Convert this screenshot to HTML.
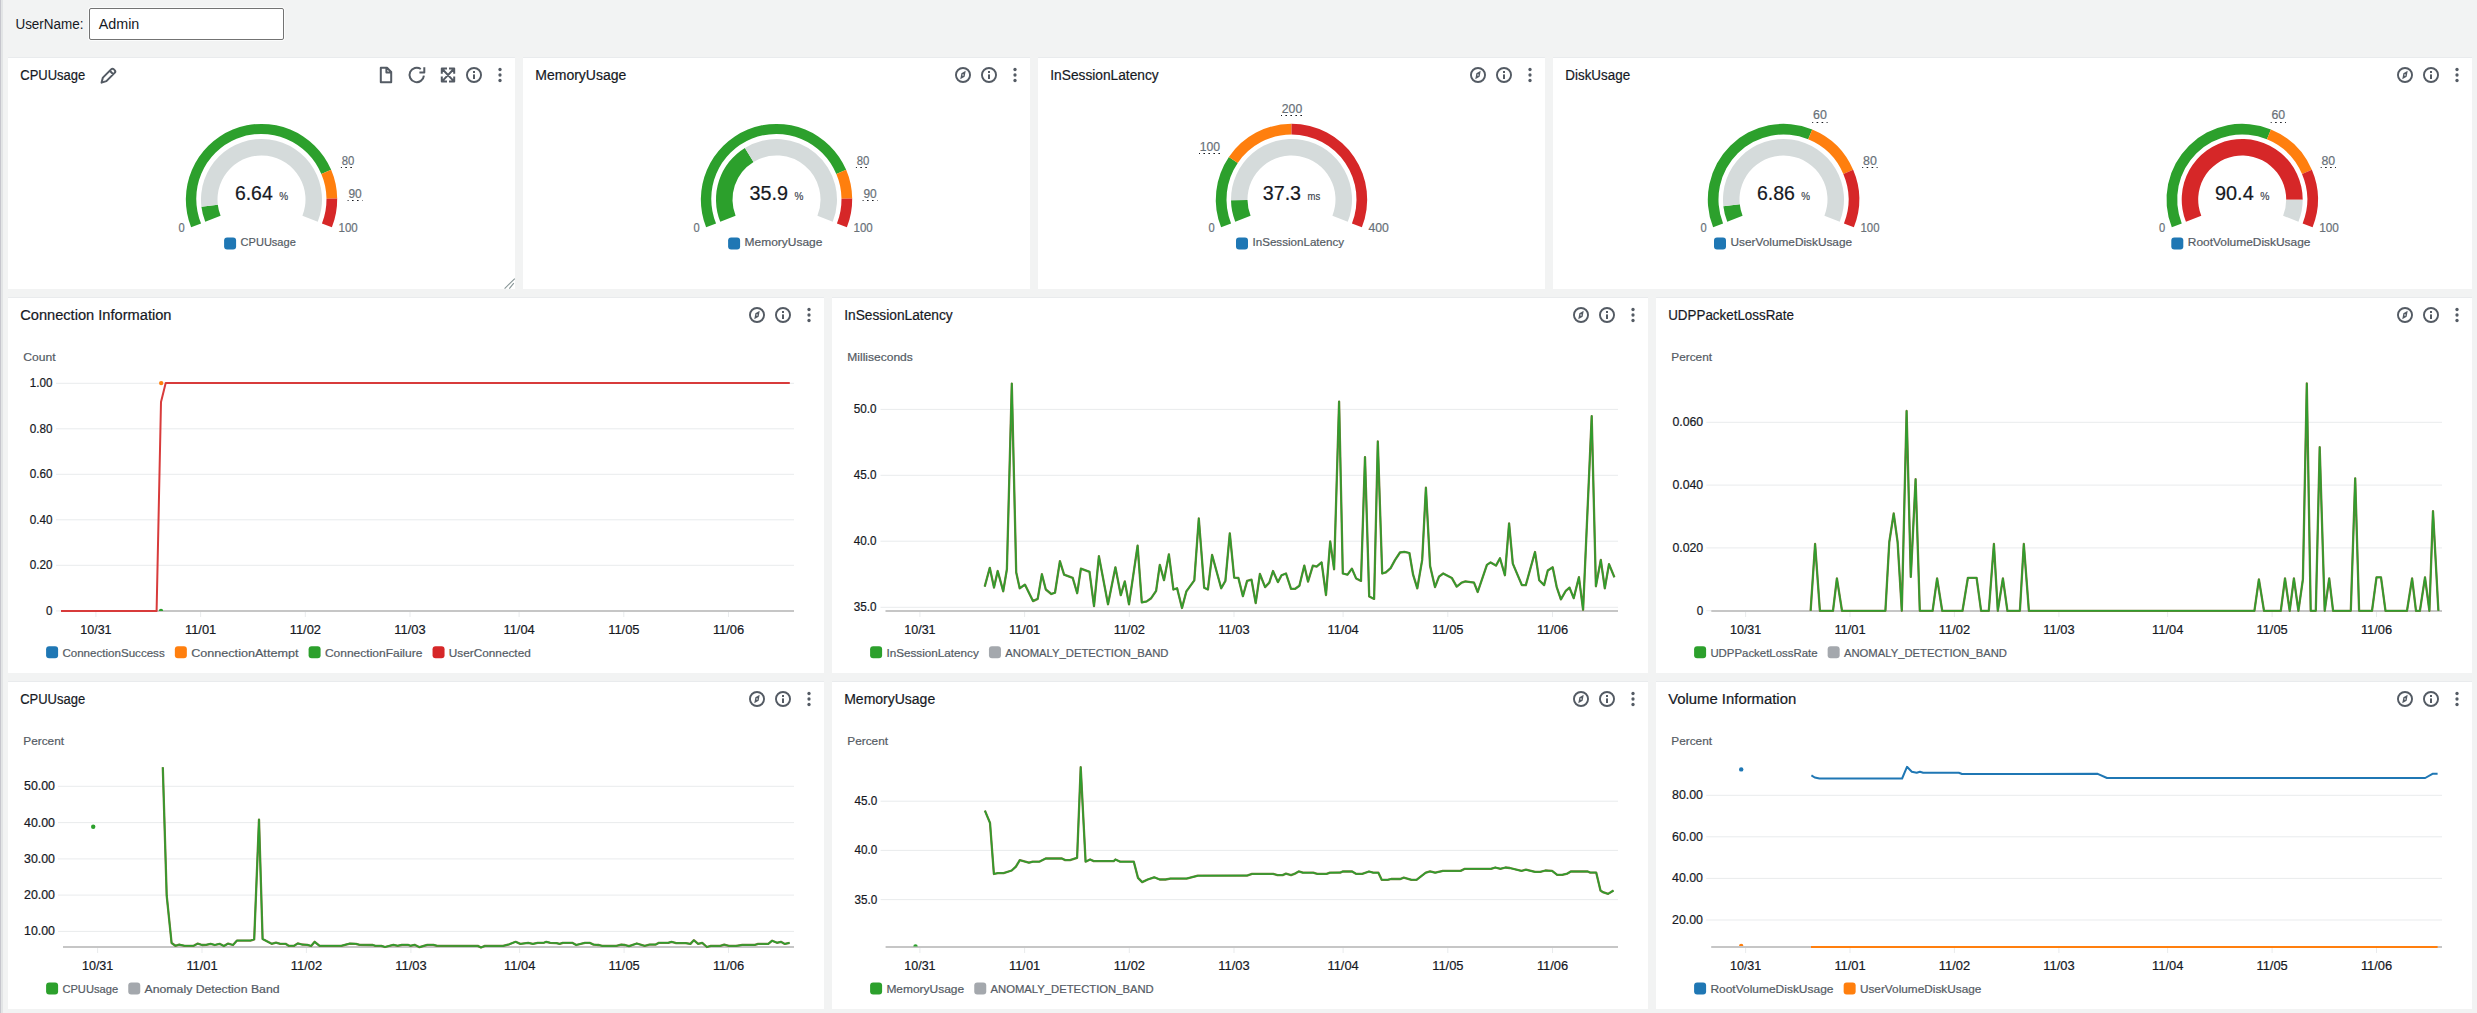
<!DOCTYPE html>
<html><head><meta charset="utf-8"><title>Dashboard</title>
<style>
html,body{margin:0;padding:0;}
body{width:2477px;height:1013px;overflow:hidden;background:#f2f3f3;position:relative;font-family:"Liberation Sans", sans-serif;}
.lb{position:absolute;left:0;top:0;width:1px;height:1013px;background:#c6c6cd;}
.lb2{position:absolute;left:1px;top:0;width:2px;height:1013px;background:#e3e5e6;}
.p{position:absolute;background:#fff;box-shadow:0 -1px 0 #e9ebed;}
.lbl{position:absolute;left:15px;top:15px;font-size:14px;color:#16191f;}
.inp{position:absolute;left:89px;top:8px;width:193px;height:30px;border:1px solid #737373;border-radius:2px;background:#fff;box-shadow:0 0 0 1px rgba(255,255,255,.7);}
svg{position:absolute;left:0;top:0;}
text{font-family:"Liberation Sans", sans-serif;}
</style></head><body>
<div class="lb"></div><div class="lb2"></div>
<div class="inp"></div>
<div class="p" style="left:8px;top:58px;width:507px;height:231px"></div><div class="p" style="left:523px;top:58px;width:507px;height:231px"></div><div class="p" style="left:1038px;top:58px;width:507px;height:231px"></div><div class="p" style="left:1553px;top:58px;width:919px;height:231px"></div><div class="p" style="left:8px;top:298px;width:816px;height:375px"></div><div class="p" style="left:832px;top:298px;width:816px;height:375px"></div><div class="p" style="left:1656px;top:298px;width:816px;height:375px"></div><div class="p" style="left:8px;top:682px;width:816px;height:327px"></div><div class="p" style="left:832px;top:682px;width:816px;height:327px"></div><div class="p" style="left:1656px;top:682px;width:816px;height:327px"></div>
<svg width="2477" height="1013" viewBox="0 0 2477 1013">
<text x="15.4" y="29.1" font-size="14" fill="#16191f" textLength="68.2" lengthAdjust="spacingAndGlyphs">UserName:</text>
<text x="98.7" y="29.1" font-size="14" fill="#16191f" textLength="40.6" lengthAdjust="spacingAndGlyphs">Admin</text>
<text x="20.00" y="80.00" font-size="14" fill="#16191f"></text>
<text x="535.00" y="80.00" font-size="14" fill="#16191f"></text>
<text x="1050.00" y="80.00" font-size="14" fill="#16191f"></text>
<text x="1565.00" y="80.00" font-size="14" fill="#16191f"></text>
<text x="20.30" y="80.00" font-size="14" fill="#16191f" stroke="#16191f" stroke-width="0.2" textLength="65.00" lengthAdjust="spacingAndGlyphs">CPUUsage</text>
<circle cx="500" cy="69.5" r="1.65" fill="#545b64"/>
<circle cx="500" cy="75" r="1.65" fill="#545b64"/>
<circle cx="500" cy="80.5" r="1.65" fill="#545b64"/>
<circle cx="474" cy="75" r="7.05" fill="none" stroke="#545b64" stroke-width="1.9"/>
<rect x="473" y="71" width="2" height="2" fill="#545b64"/>
<rect x="473" y="74.4" width="2" height="4.6" fill="#545b64"/>
<text x="535.30" y="80.00" font-size="14" fill="#16191f" stroke="#16191f" stroke-width="0.2" textLength="91.00" lengthAdjust="spacingAndGlyphs">MemoryUsage</text>
<circle cx="1015" cy="69.5" r="1.65" fill="#545b64"/>
<circle cx="1015" cy="75" r="1.65" fill="#545b64"/>
<circle cx="1015" cy="80.5" r="1.65" fill="#545b64"/>
<circle cx="989" cy="75" r="7.05" fill="none" stroke="#545b64" stroke-width="1.9"/>
<rect x="988" y="71" width="2" height="2" fill="#545b64"/>
<rect x="988" y="74.4" width="2" height="4.6" fill="#545b64"/>
<circle cx="963" cy="75" r="7.05" fill="none" stroke="#545b64" stroke-width="1.9"/>
<path d="M965.7,70.8 L964.6,76.7 L960.3,79.2 L961.4,73.3 Z" fill="#545b64"/>
<rect x="962.3" y="74.3" width="1.4" height="1.4" fill="#e8eaec"/>
<text x="1050.30" y="80.00" font-size="14" fill="#16191f" stroke="#16191f" stroke-width="0.2" textLength="108.40" lengthAdjust="spacingAndGlyphs">InSessionLatency</text>
<circle cx="1530" cy="69.5" r="1.65" fill="#545b64"/>
<circle cx="1530" cy="75" r="1.65" fill="#545b64"/>
<circle cx="1530" cy="80.5" r="1.65" fill="#545b64"/>
<circle cx="1504" cy="75" r="7.05" fill="none" stroke="#545b64" stroke-width="1.9"/>
<rect x="1503" y="71" width="2" height="2" fill="#545b64"/>
<rect x="1503" y="74.4" width="2" height="4.6" fill="#545b64"/>
<circle cx="1478" cy="75" r="7.05" fill="none" stroke="#545b64" stroke-width="1.9"/>
<path d="M1480.7,70.8 L1479.6,76.7 L1475.3,79.2 L1476.4,73.3 Z" fill="#545b64"/>
<rect x="1477.3" y="74.3" width="1.4" height="1.4" fill="#e8eaec"/>
<text x="1565.30" y="80.00" font-size="14" fill="#16191f" stroke="#16191f" stroke-width="0.2" textLength="64.80" lengthAdjust="spacingAndGlyphs">DiskUsage</text>
<circle cx="2457" cy="69.5" r="1.65" fill="#545b64"/>
<circle cx="2457" cy="75" r="1.65" fill="#545b64"/>
<circle cx="2457" cy="80.5" r="1.65" fill="#545b64"/>
<circle cx="2431" cy="75" r="7.05" fill="none" stroke="#545b64" stroke-width="1.9"/>
<rect x="2430" y="71" width="2" height="2" fill="#545b64"/>
<rect x="2430" y="74.4" width="2" height="4.6" fill="#545b64"/>
<circle cx="2405" cy="75" r="7.05" fill="none" stroke="#545b64" stroke-width="1.9"/>
<path d="M2407.7,70.8 L2406.6,76.7 L2402.3,79.2 L2403.4,73.3 Z" fill="#545b64"/>
<rect x="2404.3" y="74.3" width="1.4" height="1.4" fill="#e8eaec"/>
<text x="20.20" y="320.00" font-size="14" fill="#16191f" stroke="#16191f" stroke-width="0.2" textLength="151.30" lengthAdjust="spacingAndGlyphs">Connection Information</text>
<circle cx="809" cy="309.5" r="1.65" fill="#545b64"/>
<circle cx="809" cy="315" r="1.65" fill="#545b64"/>
<circle cx="809" cy="320.5" r="1.65" fill="#545b64"/>
<circle cx="783" cy="315" r="7.05" fill="none" stroke="#545b64" stroke-width="1.9"/>
<rect x="782" y="311" width="2" height="2" fill="#545b64"/>
<rect x="782" y="314.4" width="2" height="4.6" fill="#545b64"/>
<circle cx="757" cy="315" r="7.05" fill="none" stroke="#545b64" stroke-width="1.9"/>
<path d="M759.7,310.8 L758.6,316.7 L754.3,319.2 L755.4,313.3 Z" fill="#545b64"/>
<rect x="756.3" y="314.3" width="1.4" height="1.4" fill="#e8eaec"/>
<text x="844.20" y="320.00" font-size="14" fill="#16191f" stroke="#16191f" stroke-width="0.2" textLength="108.50" lengthAdjust="spacingAndGlyphs">InSessionLatency</text>
<circle cx="1633" cy="309.5" r="1.65" fill="#545b64"/>
<circle cx="1633" cy="315" r="1.65" fill="#545b64"/>
<circle cx="1633" cy="320.5" r="1.65" fill="#545b64"/>
<circle cx="1607" cy="315" r="7.05" fill="none" stroke="#545b64" stroke-width="1.9"/>
<rect x="1606" y="311" width="2" height="2" fill="#545b64"/>
<rect x="1606" y="314.4" width="2" height="4.6" fill="#545b64"/>
<circle cx="1581" cy="315" r="7.05" fill="none" stroke="#545b64" stroke-width="1.9"/>
<path d="M1583.7,310.8 L1582.6,316.7 L1578.3,319.2 L1579.4,313.3 Z" fill="#545b64"/>
<rect x="1580.3" y="314.3" width="1.4" height="1.4" fill="#e8eaec"/>
<text x="1668.20" y="320.00" font-size="14" fill="#16191f" stroke="#16191f" stroke-width="0.2" textLength="125.80" lengthAdjust="spacingAndGlyphs">UDPPacketLossRate</text>
<circle cx="2457" cy="309.5" r="1.65" fill="#545b64"/>
<circle cx="2457" cy="315" r="1.65" fill="#545b64"/>
<circle cx="2457" cy="320.5" r="1.65" fill="#545b64"/>
<circle cx="2431" cy="315" r="7.05" fill="none" stroke="#545b64" stroke-width="1.9"/>
<rect x="2430" y="311" width="2" height="2" fill="#545b64"/>
<rect x="2430" y="314.4" width="2" height="4.6" fill="#545b64"/>
<circle cx="2405" cy="315" r="7.05" fill="none" stroke="#545b64" stroke-width="1.9"/>
<path d="M2407.7,310.8 L2406.6,316.7 L2402.3,319.2 L2403.4,313.3 Z" fill="#545b64"/>
<rect x="2404.3" y="314.3" width="1.4" height="1.4" fill="#e8eaec"/>
<text x="20.20" y="704.00" font-size="14" fill="#16191f" stroke="#16191f" stroke-width="0.2" textLength="65.00" lengthAdjust="spacingAndGlyphs">CPUUsage</text>
<circle cx="809" cy="693.5" r="1.65" fill="#545b64"/>
<circle cx="809" cy="699" r="1.65" fill="#545b64"/>
<circle cx="809" cy="704.5" r="1.65" fill="#545b64"/>
<circle cx="783" cy="699" r="7.05" fill="none" stroke="#545b64" stroke-width="1.9"/>
<rect x="782" y="695" width="2" height="2" fill="#545b64"/>
<rect x="782" y="698.4" width="2" height="4.6" fill="#545b64"/>
<circle cx="757" cy="699" r="7.05" fill="none" stroke="#545b64" stroke-width="1.9"/>
<path d="M759.7,694.8 L758.6,700.7 L754.3,703.2 L755.4,697.3 Z" fill="#545b64"/>
<rect x="756.3" y="698.3" width="1.4" height="1.4" fill="#e8eaec"/>
<text x="844.20" y="704.00" font-size="14" fill="#16191f" stroke="#16191f" stroke-width="0.2" textLength="91.00" lengthAdjust="spacingAndGlyphs">MemoryUsage</text>
<circle cx="1633" cy="693.5" r="1.65" fill="#545b64"/>
<circle cx="1633" cy="699" r="1.65" fill="#545b64"/>
<circle cx="1633" cy="704.5" r="1.65" fill="#545b64"/>
<circle cx="1607" cy="699" r="7.05" fill="none" stroke="#545b64" stroke-width="1.9"/>
<rect x="1606" y="695" width="2" height="2" fill="#545b64"/>
<rect x="1606" y="698.4" width="2" height="4.6" fill="#545b64"/>
<circle cx="1581" cy="699" r="7.05" fill="none" stroke="#545b64" stroke-width="1.9"/>
<path d="M1583.7,694.8 L1582.6,700.7 L1578.3,703.2 L1579.4,697.3 Z" fill="#545b64"/>
<rect x="1580.3" y="698.3" width="1.4" height="1.4" fill="#e8eaec"/>
<text x="1668.20" y="704.00" font-size="14" fill="#16191f" stroke="#16191f" stroke-width="0.2" textLength="128.00" lengthAdjust="spacingAndGlyphs">Volume Information</text>
<circle cx="2457" cy="693.5" r="1.65" fill="#545b64"/>
<circle cx="2457" cy="699" r="1.65" fill="#545b64"/>
<circle cx="2457" cy="704.5" r="1.65" fill="#545b64"/>
<circle cx="2431" cy="699" r="7.05" fill="none" stroke="#545b64" stroke-width="1.9"/>
<rect x="2430" y="695" width="2" height="2" fill="#545b64"/>
<rect x="2430" y="698.4" width="2" height="4.6" fill="#545b64"/>
<circle cx="2405" cy="699" r="7.05" fill="none" stroke="#545b64" stroke-width="1.9"/>
<path d="M2407.7,694.8 L2406.6,700.7 L2402.3,703.2 L2403.4,697.3 Z" fill="#545b64"/>
<rect x="2404.3" y="698.3" width="1.4" height="1.4" fill="#e8eaec"/>
<path d="M441.8,73.8 V68.6 H447 M449,68.6 H454.2 V73.8 M454.2,76.4 V81.6 H449 M447,81.6 H441.8 V76.4 M443,69.8 L453,80.4 M453,69.8 L443,80.4" fill="none" stroke="#545b64" stroke-width="2" stroke-linejoin="round" stroke-linejoin="miter"/>
<path d="M441,68 L445.5,68 L441,72.5 Z M455,68 L450.5,68 L455,72.5 Z M441,82 L445.5,82 L441,77.5 Z M455,82 L450.5,82 L455,77.5 Z" fill="#545b64"/>
<path d="M423.9,75.6 A7.2,7.2 0 1 1 420.8,69.0" fill="none" stroke="#545b64" stroke-width="2" stroke-linejoin="round"/>
<path d="M419.4,72.4 H424.3 V67.3" fill="none" stroke="#545b64" stroke-width="2" stroke-linejoin="round" stroke-linejoin="miter"/>
<path d="M380.8,67.8 H387 L391.2,72 V82.2 H380.8 Z M386.4,68 V72.6 H391" fill="none" stroke="#545b64" stroke-width="2" stroke-linejoin="round" stroke-linejoin="miter"/>
<path d="M101.6,82.6 L102.9,77.6 L111.1,69.4 Q112.5,68 113.9,69.4 L114.6,70.1 Q116,71.5 114.6,72.9 L106.4,81.1 Z M109.8,70.8 L113.2,74.2" fill="none" stroke="#545b64" stroke-width="2" stroke-linejoin="round"/>
<path d="M504.6,288.6 L514.8,278.6 M509.3,288.6 L513.8,283.2" stroke="#879596" stroke-width="1.1" fill="none"/>
<path d="M191.12,227.37 A75.7,75.7 0 0 1 331.16,169.87 L321.32,174.06 A65,65 0 0 0 201.06,223.43 Z" fill="#2ca02c"/>
<path d="M331.16,169.87 A75.7,75.7 0 0 1 337.19,198.55 L326.49,198.68 A65,65 0 0 0 321.32,174.06 Z" fill="#ff7f0e"/>
<path d="M337.19,198.55 A75.7,75.7 0 0 1 331.88,227.37 L321.94,223.43 A65,65 0 0 0 326.49,198.68 Z" fill="#d62728"/>
<path d="M205.25,221.77 A60.5,60.5 0 0 1 201.42,206.64 L217.81,204.69 A44,44 0 0 0 220.59,215.70 Z" fill="#2ca02c"/>
<path d="M201.42,206.64 A60.5,60.5 0 1 1 317.75,221.77 L302.41,215.70 A44,44 0 1 0 217.81,204.69 Z" fill="#d5dbdb"/>
<text x="234.90" y="199.60" font-size="19.5" fill="#16191f" stroke="#16191f" stroke-width="0.2" textLength="37.80" lengthAdjust="spacingAndGlyphs">6.64</text>
<text x="279.20" y="199.80" font-size="11" fill="#414750" stroke="#414750" stroke-width="0.2" textLength="8.90" lengthAdjust="spacingAndGlyphs">%</text>
<text x="184.60" y="232.00" font-size="12" fill="#687078" stroke="#687078" stroke-width="0.2" text-anchor="end" textLength="6.20" lengthAdjust="spacingAndGlyphs">0</text>
<text x="338.50" y="232.00" font-size="12" fill="#687078" stroke="#687078" stroke-width="0.2" textLength="19.20" lengthAdjust="spacingAndGlyphs">100</text>
<text x="341.70" y="165.20" font-size="12" fill="#687078" stroke="#687078" stroke-width="0.2" textLength="12.60" lengthAdjust="spacingAndGlyphs">80</text>
<line x1="340.90" y1="167.5" x2="355.10" y2="167.5" stroke="#16191f" stroke-width="1" stroke-dasharray="1.6,3.4" stroke-dashoffset="0.6"/>
<text x="348.40" y="197.70" font-size="12" fill="#687078" stroke="#687078" stroke-width="0.2" textLength="13.30" lengthAdjust="spacingAndGlyphs">90</text>
<line x1="347.60" y1="200.5" x2="362.50" y2="200.5" stroke="#16191f" stroke-width="1" stroke-dasharray="1.6,3.4" stroke-dashoffset="0.6"/>
<rect x="224.10" y="237.4" width="12" height="12" rx="3" fill="#1f77b4"/>
<text x="240.60" y="245.90" font-size="11" fill="#545b64" stroke="#545b64" stroke-width="0.2" textLength="55.20" lengthAdjust="spacingAndGlyphs">CPUUsage</text>
<path d="M706.12,227.37 A75.7,75.7 0 0 1 846.16,169.87 L836.32,174.06 A65,65 0 0 0 716.06,223.43 Z" fill="#2ca02c"/>
<path d="M846.16,169.87 A75.7,75.7 0 0 1 852.19,198.55 L841.49,198.68 A65,65 0 0 0 836.32,174.06 Z" fill="#ff7f0e"/>
<path d="M852.19,198.55 A75.7,75.7 0 0 1 846.88,227.37 L836.94,223.43 A65,65 0 0 0 841.49,198.68 Z" fill="#d62728"/>
<path d="M720.25,221.77 A60.5,60.5 0 0 1 744.91,147.90 L753.53,161.97 A44,44 0 0 0 735.59,215.70 Z" fill="#2ca02c"/>
<path d="M744.91,147.90 A60.5,60.5 0 0 1 832.75,221.77 L817.41,215.70 A44,44 0 0 0 753.53,161.97 Z" fill="#d5dbdb"/>
<text x="749.55" y="199.60" font-size="19.5" fill="#16191f" stroke="#16191f" stroke-width="0.2" textLength="38.50" lengthAdjust="spacingAndGlyphs">35.9</text>
<text x="794.55" y="199.80" font-size="11" fill="#414750" stroke="#414750" stroke-width="0.2" textLength="8.90" lengthAdjust="spacingAndGlyphs">%</text>
<text x="699.60" y="232.00" font-size="12" fill="#687078" stroke="#687078" stroke-width="0.2" text-anchor="end" textLength="6.20" lengthAdjust="spacingAndGlyphs">0</text>
<text x="853.50" y="232.00" font-size="12" fill="#687078" stroke="#687078" stroke-width="0.2" textLength="19.20" lengthAdjust="spacingAndGlyphs">100</text>
<text x="856.70" y="165.20" font-size="12" fill="#687078" stroke="#687078" stroke-width="0.2" textLength="12.60" lengthAdjust="spacingAndGlyphs">80</text>
<line x1="855.90" y1="167.5" x2="870.10" y2="167.5" stroke="#16191f" stroke-width="1" stroke-dasharray="1.6,3.4" stroke-dashoffset="0.6"/>
<text x="863.40" y="197.70" font-size="12" fill="#687078" stroke="#687078" stroke-width="0.2" textLength="13.30" lengthAdjust="spacingAndGlyphs">90</text>
<line x1="862.60" y1="200.5" x2="877.50" y2="200.5" stroke="#16191f" stroke-width="1" stroke-dasharray="1.6,3.4" stroke-dashoffset="0.6"/>
<rect x="728.10" y="237.4" width="12" height="12" rx="3" fill="#1f77b4"/>
<text x="744.60" y="245.90" font-size="11" fill="#545b64" stroke="#545b64" stroke-width="0.2" textLength="77.80" lengthAdjust="spacingAndGlyphs">MemoryUsage</text>
<path d="M1221.12,227.37 A75.7,75.7 0 0 1 1228.89,156.95 L1237.74,162.96 A65,65 0 0 0 1231.06,223.43 Z" fill="#2ca02c"/>
<path d="M1228.89,156.95 A75.7,75.7 0 0 1 1291.50,123.80 L1291.50,134.50 A65,65 0 0 0 1237.74,162.96 Z" fill="#ff7f0e"/>
<path d="M1291.50,123.80 A75.7,75.7 0 0 1 1361.88,227.37 L1351.94,223.43 A65,65 0 0 0 1291.50,134.50 Z" fill="#d62728"/>
<path d="M1235.25,221.77 A60.5,60.5 0 0 1 1231.01,200.33 L1247.50,200.10 A44,44 0 0 0 1250.59,215.70 Z" fill="#2ca02c"/>
<path d="M1231.01,200.33 A60.5,60.5 0 1 1 1347.75,221.77 L1332.41,215.70 A44,44 0 1 0 1247.50,200.10 Z" fill="#d5dbdb"/>
<text x="1262.75" y="199.60" font-size="19.5" fill="#16191f" stroke="#16191f" stroke-width="0.2" textLength="38.30" lengthAdjust="spacingAndGlyphs">37.3</text>
<text x="1307.55" y="199.80" font-size="11" fill="#414750" stroke="#414750" stroke-width="0.2" textLength="12.70" lengthAdjust="spacingAndGlyphs">ms</text>
<text x="1214.60" y="232.00" font-size="12" fill="#687078" stroke="#687078" stroke-width="0.2" text-anchor="end" textLength="6.20" lengthAdjust="spacingAndGlyphs">0</text>
<text x="1368.50" y="232.00" font-size="12" fill="#687078" stroke="#687078" stroke-width="0.2" textLength="20.40" lengthAdjust="spacingAndGlyphs">400</text>
<text x="1199.80" y="150.80" font-size="12" fill="#687078" stroke="#687078" stroke-width="0.2" textLength="20.30" lengthAdjust="spacingAndGlyphs">100</text>
<line x1="1199.00" y1="153.5" x2="1220.90" y2="153.5" stroke="#16191f" stroke-width="1" stroke-dasharray="1.6,3.4" stroke-dashoffset="0.6"/>
<text x="1281.80" y="113.00" font-size="12" fill="#687078" stroke="#687078" stroke-width="0.2" textLength="20.40" lengthAdjust="spacingAndGlyphs">200</text>
<line x1="1281.00" y1="115.5" x2="1303.00" y2="115.5" stroke="#16191f" stroke-width="1" stroke-dasharray="1.6,3.4" stroke-dashoffset="0.6"/>
<rect x="1236.00" y="237.4" width="12" height="12" rx="3" fill="#1f77b4"/>
<text x="1252.50" y="245.90" font-size="11" fill="#545b64" stroke="#545b64" stroke-width="0.2" textLength="91.60" lengthAdjust="spacingAndGlyphs">InSessionLatency</text>
<path d="M1713.12,227.37 A75.7,75.7 0 0 1 1812.25,129.47 L1808.19,139.37 A65,65 0 0 0 1723.06,223.43 Z" fill="#2ca02c"/>
<path d="M1812.25,129.47 A75.7,75.7 0 0 1 1853.16,169.87 L1843.32,174.06 A65,65 0 0 0 1808.19,139.37 Z" fill="#ff7f0e"/>
<path d="M1853.16,169.87 A75.7,75.7 0 0 1 1853.88,227.37 L1843.94,223.43 A65,65 0 0 0 1843.32,174.06 Z" fill="#d62728"/>
<path d="M1727.25,221.77 A60.5,60.5 0 0 1 1723.36,206.13 L1739.76,204.32 A44,44 0 0 0 1742.59,215.70 Z" fill="#2ca02c"/>
<path d="M1723.36,206.13 A60.5,60.5 0 1 1 1839.75,221.77 L1824.41,215.70 A44,44 0 1 0 1739.76,204.32 Z" fill="#d5dbdb"/>
<text x="1756.90" y="199.60" font-size="19.5" fill="#16191f" stroke="#16191f" stroke-width="0.2" textLength="37.90" lengthAdjust="spacingAndGlyphs">6.86</text>
<text x="1801.30" y="199.80" font-size="11" fill="#414750" stroke="#414750" stroke-width="0.2" textLength="8.80" lengthAdjust="spacingAndGlyphs">%</text>
<text x="1706.60" y="232.00" font-size="12" fill="#687078" stroke="#687078" stroke-width="0.2" text-anchor="end" textLength="6.20" lengthAdjust="spacingAndGlyphs">0</text>
<text x="1860.50" y="232.00" font-size="12" fill="#687078" stroke="#687078" stroke-width="0.2" textLength="19.00" lengthAdjust="spacingAndGlyphs">100</text>
<text x="1813.00" y="119.40" font-size="12" fill="#687078" stroke="#687078" stroke-width="0.2" textLength="13.80" lengthAdjust="spacingAndGlyphs">60</text>
<line x1="1812.20" y1="122.5" x2="1827.60" y2="122.5" stroke="#16191f" stroke-width="1" stroke-dasharray="1.6,3.4" stroke-dashoffset="0.6"/>
<text x="1863.00" y="165.10" font-size="12" fill="#687078" stroke="#687078" stroke-width="0.2" textLength="13.80" lengthAdjust="spacingAndGlyphs">80</text>
<line x1="1862.20" y1="167.5" x2="1877.60" y2="167.5" stroke="#16191f" stroke-width="1" stroke-dasharray="1.6,3.4" stroke-dashoffset="0.6"/>
<rect x="1714.00" y="237.4" width="12" height="12" rx="3" fill="#1f77b4"/>
<text x="1730.50" y="245.90" font-size="11" fill="#545b64" stroke="#545b64" stroke-width="0.2" textLength="121.60" lengthAdjust="spacingAndGlyphs">UserVolumeDiskUsage</text>
<path d="M2171.82,227.37 A75.7,75.7 0 0 1 2270.95,129.47 L2266.89,139.37 A65,65 0 0 0 2181.76,223.43 Z" fill="#2ca02c"/>
<path d="M2270.95,129.47 A75.7,75.7 0 0 1 2311.86,169.87 L2302.02,174.06 A65,65 0 0 0 2266.89,139.37 Z" fill="#ff7f0e"/>
<path d="M2311.86,169.87 A75.7,75.7 0 0 1 2312.58,227.37 L2302.64,223.43 A65,65 0 0 0 2302.02,174.06 Z" fill="#d62728"/>
<path d="M2185.95,221.77 A60.5,60.5 0 1 1 2302.70,199.68 L2286.20,199.63 A44,44 0 1 0 2201.29,215.70 Z" fill="#d62728"/>
<path d="M2302.70,199.68 A60.5,60.5 0 0 1 2298.45,221.77 L2283.11,215.70 A44,44 0 0 0 2286.20,199.63 Z" fill="#d5dbdb"/>
<text x="2215.00" y="199.60" font-size="19.5" fill="#16191f" stroke="#16191f" stroke-width="0.2" textLength="38.70" lengthAdjust="spacingAndGlyphs">90.4</text>
<text x="2260.20" y="199.80" font-size="11" fill="#414750" stroke="#414750" stroke-width="0.2" textLength="9.20" lengthAdjust="spacingAndGlyphs">%</text>
<text x="2165.30" y="232.00" font-size="12" fill="#687078" stroke="#687078" stroke-width="0.2" text-anchor="end" textLength="6.20" lengthAdjust="spacingAndGlyphs">0</text>
<text x="2319.20" y="232.00" font-size="12" fill="#687078" stroke="#687078" stroke-width="0.2" textLength="19.70" lengthAdjust="spacingAndGlyphs">100</text>
<text x="2271.50" y="119.40" font-size="12" fill="#687078" stroke="#687078" stroke-width="0.2" textLength="13.70" lengthAdjust="spacingAndGlyphs">60</text>
<line x1="2270.70" y1="122.5" x2="2286.00" y2="122.5" stroke="#16191f" stroke-width="1" stroke-dasharray="1.6,3.4" stroke-dashoffset="0.6"/>
<text x="2321.50" y="165.10" font-size="12" fill="#687078" stroke="#687078" stroke-width="0.2" textLength="13.70" lengthAdjust="spacingAndGlyphs">80</text>
<line x1="2320.70" y1="167.5" x2="2336.00" y2="167.5" stroke="#16191f" stroke-width="1" stroke-dasharray="1.6,3.4" stroke-dashoffset="0.6"/>
<rect x="2171.30" y="237.4" width="12" height="12" rx="3" fill="#1f77b4"/>
<text x="2187.80" y="245.90" font-size="11" fill="#545b64" stroke="#545b64" stroke-width="0.2" textLength="122.70" lengthAdjust="spacingAndGlyphs">RootVolumeDiskUsage</text>
<text x="23.30" y="361.20" font-size="11" fill="#545b64" stroke="#545b64" stroke-width="0.2" textLength="32.30" lengthAdjust="spacingAndGlyphs">Count</text>
<rect x="56.0" y="382.80" width="738.0" height="1" fill="#e9ebed"/>
<text x="52.60" y="387.30" font-size="12" fill="#16191f" stroke="#16191f" stroke-width="0.2" text-anchor="end" textLength="22.80" lengthAdjust="spacingAndGlyphs">1.00</text>
<rect x="56.0" y="428.30" width="738.0" height="1" fill="#e9ebed"/>
<text x="52.60" y="432.80" font-size="12" fill="#16191f" stroke="#16191f" stroke-width="0.2" text-anchor="end" textLength="22.80" lengthAdjust="spacingAndGlyphs">0.80</text>
<rect x="56.0" y="473.80" width="738.0" height="1" fill="#e9ebed"/>
<text x="52.60" y="478.30" font-size="12" fill="#16191f" stroke="#16191f" stroke-width="0.2" text-anchor="end" textLength="22.80" lengthAdjust="spacingAndGlyphs">0.60</text>
<rect x="56.0" y="519.30" width="738.0" height="1" fill="#e9ebed"/>
<text x="52.60" y="523.80" font-size="12" fill="#16191f" stroke="#16191f" stroke-width="0.2" text-anchor="end" textLength="22.80" lengthAdjust="spacingAndGlyphs">0.40</text>
<rect x="56.0" y="564.80" width="738.0" height="1" fill="#e9ebed"/>
<text x="52.60" y="569.30" font-size="12" fill="#16191f" stroke="#16191f" stroke-width="0.2" text-anchor="end" textLength="22.80" lengthAdjust="spacingAndGlyphs">0.20</text>
<rect x="56.0" y="610.40" width="738.0" height="1" fill="#e9ebed"/>
<text x="52.60" y="614.90" font-size="12" fill="#16191f" stroke="#16191f" stroke-width="0.2" text-anchor="end" textLength="6.50" lengthAdjust="spacingAndGlyphs">0</text>
<rect x="61.0" y="610" width="733.0" height="2" fill="#c6c6c6"/>
<rect x="95.4" y="612" width="1" height="5" fill="#e9ebed"/>
<text x="80.25" y="634.10" font-size="12.5" fill="#16191f" stroke="#16191f" stroke-width="0.2" textLength="31.30" lengthAdjust="spacingAndGlyphs">10/31</text>
<rect x="200.1" y="612" width="1" height="5" fill="#e9ebed"/>
<text x="184.97" y="634.10" font-size="12.5" fill="#16191f" stroke="#16191f" stroke-width="0.2" textLength="31.30" lengthAdjust="spacingAndGlyphs">11/01</text>
<rect x="304.8" y="612" width="1" height="5" fill="#e9ebed"/>
<text x="289.68" y="634.10" font-size="12.5" fill="#16191f" stroke="#16191f" stroke-width="0.2" textLength="31.30" lengthAdjust="spacingAndGlyphs">11/02</text>
<rect x="409.5" y="612" width="1" height="5" fill="#e9ebed"/>
<text x="394.39" y="634.10" font-size="12.5" fill="#16191f" stroke="#16191f" stroke-width="0.2" textLength="31.30" lengthAdjust="spacingAndGlyphs">11/03</text>
<rect x="518.6" y="612" width="1" height="5" fill="#e9ebed"/>
<text x="503.47" y="634.10" font-size="12.5" fill="#16191f" stroke="#16191f" stroke-width="0.2" textLength="31.30" lengthAdjust="spacingAndGlyphs">11/04</text>
<rect x="623.3" y="612" width="1" height="5" fill="#e9ebed"/>
<text x="608.19" y="634.10" font-size="12.5" fill="#16191f" stroke="#16191f" stroke-width="0.2" textLength="31.30" lengthAdjust="spacingAndGlyphs">11/05</text>
<rect x="728.0" y="612" width="1" height="5" fill="#e9ebed"/>
<text x="712.90" y="634.10" font-size="12.5" fill="#16191f" stroke="#16191f" stroke-width="0.2" textLength="31.30" lengthAdjust="spacingAndGlyphs">11/06</text>
<rect x="46.10" y="646.30" width="12" height="12" rx="3" fill="#1f77b4"/>
<text x="62.40" y="656.80" font-size="11" fill="#545b64" stroke="#545b64" stroke-width="0.2" textLength="102.30" lengthAdjust="spacingAndGlyphs">ConnectionSuccess</text>
<rect x="174.85" y="646.30" width="12" height="12" rx="3" fill="#ff7f0e"/>
<text x="191.15" y="656.80" font-size="11" fill="#545b64" stroke="#545b64" stroke-width="0.2" textLength="107.30" lengthAdjust="spacingAndGlyphs">ConnectionAttempt</text>
<rect x="308.60" y="646.30" width="12" height="12" rx="3" fill="#2ca02c"/>
<text x="324.90" y="656.80" font-size="11" fill="#545b64" stroke="#545b64" stroke-width="0.2" textLength="97.50" lengthAdjust="spacingAndGlyphs">ConnectionFailure</text>
<rect x="432.55" y="646.30" width="12" height="12" rx="3" fill="#d62728"/>
<text x="448.85" y="656.80" font-size="11" fill="#545b64" stroke="#545b64" stroke-width="0.2" textLength="81.90" lengthAdjust="spacingAndGlyphs">UserConnected</text>
<path d="M158.8,611 A2.2,2.2 0 0 1 163.2,611 Z" fill="#2ca02c"/>
<polyline points="61.0,611.0 156.6,611.0 161.0,402.0 165.7,383.1 789.8,383.1" fill="none" stroke="#d83b3b" stroke-width="2" stroke-linejoin="round"/>
<circle cx="161.2" cy="383.1" r="2.2" fill="#ff7f0e"/>
<text x="847.30" y="361.20" font-size="11" fill="#545b64" stroke="#545b64" stroke-width="0.2" textLength="65.50" lengthAdjust="spacingAndGlyphs">Milliseconds</text>
<rect x="880.5" y="408.90" width="737.5" height="1" fill="#e9ebed"/>
<text x="876.60" y="413.40" font-size="12" fill="#16191f" stroke="#16191f" stroke-width="0.2" text-anchor="end" textLength="22.80" lengthAdjust="spacingAndGlyphs">50.0</text>
<rect x="880.5" y="474.80" width="737.5" height="1" fill="#e9ebed"/>
<text x="876.60" y="479.30" font-size="12" fill="#16191f" stroke="#16191f" stroke-width="0.2" text-anchor="end" textLength="22.80" lengthAdjust="spacingAndGlyphs">45.0</text>
<rect x="880.5" y="540.70" width="737.5" height="1" fill="#e9ebed"/>
<text x="876.60" y="545.20" font-size="12" fill="#16191f" stroke="#16191f" stroke-width="0.2" text-anchor="end" textLength="22.80" lengthAdjust="spacingAndGlyphs">40.0</text>
<rect x="880.5" y="606.80" width="737.5" height="1" fill="#e9ebed"/>
<text x="876.60" y="611.30" font-size="12" fill="#16191f" stroke="#16191f" stroke-width="0.2" text-anchor="end" textLength="22.80" lengthAdjust="spacingAndGlyphs">35.0</text>
<rect x="885.5" y="610" width="732.5" height="2" fill="#c6c6c6"/>
<rect x="919.4" y="612" width="1" height="5" fill="#e9ebed"/>
<text x="904.25" y="634.10" font-size="12.5" fill="#16191f" stroke="#16191f" stroke-width="0.2" textLength="31.30" lengthAdjust="spacingAndGlyphs">10/31</text>
<rect x="1024.1" y="612" width="1" height="5" fill="#e9ebed"/>
<text x="1008.97" y="634.10" font-size="12.5" fill="#16191f" stroke="#16191f" stroke-width="0.2" textLength="31.30" lengthAdjust="spacingAndGlyphs">11/01</text>
<rect x="1128.8" y="612" width="1" height="5" fill="#e9ebed"/>
<text x="1113.68" y="634.10" font-size="12.5" fill="#16191f" stroke="#16191f" stroke-width="0.2" textLength="31.30" lengthAdjust="spacingAndGlyphs">11/02</text>
<rect x="1233.5" y="612" width="1" height="5" fill="#e9ebed"/>
<text x="1218.39" y="634.10" font-size="12.5" fill="#16191f" stroke="#16191f" stroke-width="0.2" textLength="31.30" lengthAdjust="spacingAndGlyphs">11/03</text>
<rect x="1342.6" y="612" width="1" height="5" fill="#e9ebed"/>
<text x="1327.47" y="634.10" font-size="12.5" fill="#16191f" stroke="#16191f" stroke-width="0.2" textLength="31.30" lengthAdjust="spacingAndGlyphs">11/04</text>
<rect x="1447.3" y="612" width="1" height="5" fill="#e9ebed"/>
<text x="1432.19" y="634.10" font-size="12.5" fill="#16191f" stroke="#16191f" stroke-width="0.2" textLength="31.30" lengthAdjust="spacingAndGlyphs">11/05</text>
<rect x="1552.0" y="612" width="1" height="5" fill="#e9ebed"/>
<text x="1536.90" y="634.10" font-size="12.5" fill="#16191f" stroke="#16191f" stroke-width="0.2" textLength="31.30" lengthAdjust="spacingAndGlyphs">11/06</text>
<rect x="870.10" y="646.30" width="12" height="12" rx="3" fill="#2ca02c"/>
<text x="886.40" y="656.80" font-size="11" fill="#545b64" stroke="#545b64" stroke-width="0.2" textLength="92.40" lengthAdjust="spacingAndGlyphs">InSessionLatency</text>
<rect x="988.95" y="646.30" width="12" height="12" rx="3" fill="#a4a8ad"/>
<text x="1005.25" y="656.80" font-size="11" fill="#545b64" stroke="#545b64" stroke-width="0.2" textLength="163.20" lengthAdjust="spacingAndGlyphs">ANOMALY_DETECTION_BAND</text>
<polyline points="984.7,586.6 989.8,567.8 994.0,587.6 997.7,571.0 1003.2,591.3 1006.9,569.3 1011.8,383.6 1016.2,572.3 1019.7,588.3 1024.9,584.6 1033.0,601.1 1037.7,598.9 1041.9,574.2 1045.8,589.5 1051.3,594.0 1055.0,592.7 1059.9,561.2 1064.1,574.7 1072.7,577.9 1077.2,593.2 1080.9,568.6 1089.5,571.8 1094.0,606.1 1098.9,556.2 1108.0,604.3 1115.4,567.3 1120.8,595.2 1124.8,581.4 1129.0,604.3 1137.6,545.6 1141.8,602.4 1146.7,601.4 1151.2,598.2 1156.1,590.8 1159.8,564.9 1164.0,580.2 1168.9,554.3 1173.4,589.5 1177.1,588.3 1182.0,608.0 1186.4,591.3 1194.3,580.4 1198.8,518.5 1204.2,587.8 1207.9,589.5 1212.1,555.0 1221.2,588.3 1225.4,580.9 1229.8,533.3 1234.2,577.7 1238.4,578.0 1242.9,596.2 1247.1,580.9 1251.5,579.7 1255.7,603.1 1259.9,574.0 1265.1,587.1 1269.3,582.6 1273.0,571.0 1277.9,582.1 1281.6,575.2 1286.0,573.5 1291.0,588.8 1295.2,588.8 1299.4,585.8 1304.3,565.6 1308.0,581.6 1312.9,565.6 1316.6,566.6 1321.6,562.4 1326.0,595.0 1330.2,541.4 1334.1,569.3 1339.1,401.6 1342.8,573.5 1347.5,574.7 1351.9,568.6 1356.1,578.4 1361.0,580.9 1365.0,457.1 1369.2,596.4 1374.1,598.9 1377.8,441.5 1382.2,573.5 1385.9,572.3 1390.6,568.1 1395.1,559.9 1400.0,552.5 1404.4,551.8 1409.4,553.0 1413.1,574.7 1417.3,588.3 1422.2,559.9 1425.9,487.7 1430.1,566.1 1435.0,587.1 1439.0,576.7 1443.2,573.5 1451.8,577.9 1456.7,586.6 1461.7,582.6 1465.4,581.4 1474.0,582.6 1477.7,592.0 1486.9,564.9 1490.6,562.4 1496.0,565.6 1500.0,558.2 1504.9,575.2 1509.1,523.4 1512.8,563.6 1521.9,585.1 1525.8,585.1 1535.0,552.0 1539.2,580.2 1544.1,585.1 1547.8,570.5 1552.7,567.3 1556.7,587.1 1560.9,599.4 1565.8,590.8 1569.5,587.6 1573.7,598.2 1578.9,577.2 1583.1,609.8 1591.7,416.1 1595.9,586.3 1600.8,559.9 1604.8,588.3 1609.0,564.1 1614.4,577.2" fill="none" stroke="#7d7a3c" stroke-width="2.3" stroke-linejoin="round"/>
<polyline points="984.7,586.6 989.8,567.8 994.0,587.6 997.7,571.0 1003.2,591.3 1006.9,569.3 1011.8,383.6 1016.2,572.3 1019.7,588.3 1024.9,584.6 1033.0,601.1 1037.7,598.9 1041.9,574.2 1045.8,589.5 1051.3,594.0 1055.0,592.7 1059.9,561.2 1064.1,574.7 1072.7,577.9 1077.2,593.2 1080.9,568.6 1089.5,571.8 1094.0,606.1 1098.9,556.2 1108.0,604.3 1115.4,567.3 1120.8,595.2 1124.8,581.4 1129.0,604.3 1137.6,545.6 1141.8,602.4 1146.7,601.4 1151.2,598.2 1156.1,590.8 1159.8,564.9 1164.0,580.2 1168.9,554.3 1173.4,589.5 1177.1,588.3 1182.0,608.0 1186.4,591.3 1194.3,580.4 1198.8,518.5 1204.2,587.8 1207.9,589.5 1212.1,555.0 1221.2,588.3 1225.4,580.9 1229.8,533.3 1234.2,577.7 1238.4,578.0 1242.9,596.2 1247.1,580.9 1251.5,579.7 1255.7,603.1 1259.9,574.0 1265.1,587.1 1269.3,582.6 1273.0,571.0 1277.9,582.1 1281.6,575.2 1286.0,573.5 1291.0,588.8 1295.2,588.8 1299.4,585.8 1304.3,565.6 1308.0,581.6 1312.9,565.6 1316.6,566.6 1321.6,562.4 1326.0,595.0 1330.2,541.4 1334.1,569.3 1339.1,401.6 1342.8,573.5 1347.5,574.7 1351.9,568.6 1356.1,578.4 1361.0,580.9 1365.0,457.1 1369.2,596.4 1374.1,598.9 1377.8,441.5 1382.2,573.5 1385.9,572.3 1390.6,568.1 1395.1,559.9 1400.0,552.5 1404.4,551.8 1409.4,553.0 1413.1,574.7 1417.3,588.3 1422.2,559.9 1425.9,487.7 1430.1,566.1 1435.0,587.1 1439.0,576.7 1443.2,573.5 1451.8,577.9 1456.7,586.6 1461.7,582.6 1465.4,581.4 1474.0,582.6 1477.7,592.0 1486.9,564.9 1490.6,562.4 1496.0,565.6 1500.0,558.2 1504.9,575.2 1509.1,523.4 1512.8,563.6 1521.9,585.1 1525.8,585.1 1535.0,552.0 1539.2,580.2 1544.1,585.1 1547.8,570.5 1552.7,567.3 1556.7,587.1 1560.9,599.4 1565.8,590.8 1569.5,587.6 1573.7,598.2 1578.9,577.2 1583.1,609.8 1591.7,416.1 1595.9,586.3 1600.8,559.9 1604.8,588.3 1609.0,564.1 1614.4,577.2" fill="none" stroke="#2e9e2e" stroke-width="1.5" stroke-linejoin="round"/>
<text x="1671.30" y="361.20" font-size="11" fill="#545b64" stroke="#545b64" stroke-width="0.2" textLength="40.70" lengthAdjust="spacingAndGlyphs">Percent</text>
<rect x="1706.3" y="421.80" width="735.7" height="1" fill="#e9ebed"/>
<text x="1703.20" y="426.30" font-size="12" fill="#16191f" stroke="#16191f" stroke-width="0.2" text-anchor="end" textLength="30.80" lengthAdjust="spacingAndGlyphs">0.060</text>
<rect x="1706.3" y="484.60" width="735.7" height="1" fill="#e9ebed"/>
<text x="1703.20" y="489.10" font-size="12" fill="#16191f" stroke="#16191f" stroke-width="0.2" text-anchor="end" textLength="30.80" lengthAdjust="spacingAndGlyphs">0.040</text>
<rect x="1706.3" y="547.40" width="735.7" height="1" fill="#e9ebed"/>
<text x="1703.20" y="551.90" font-size="12" fill="#16191f" stroke="#16191f" stroke-width="0.2" text-anchor="end" textLength="30.80" lengthAdjust="spacingAndGlyphs">0.020</text>
<rect x="1706.3" y="610.20" width="735.7" height="1" fill="#e9ebed"/>
<text x="1703.20" y="614.70" font-size="12" fill="#16191f" stroke="#16191f" stroke-width="0.2" text-anchor="end" textLength="6.50" lengthAdjust="spacingAndGlyphs">0</text>
<rect x="1711.3" y="610" width="730.7" height="2" fill="#c6c6c6"/>
<rect x="1745.1" y="612" width="1" height="5" fill="#e9ebed"/>
<text x="1729.98" y="634.10" font-size="12.5" fill="#16191f" stroke="#16191f" stroke-width="0.2" textLength="31.30" lengthAdjust="spacingAndGlyphs">10/31</text>
<rect x="1849.5" y="612" width="1" height="5" fill="#e9ebed"/>
<text x="1834.41" y="634.10" font-size="12.5" fill="#16191f" stroke="#16191f" stroke-width="0.2" textLength="31.30" lengthAdjust="spacingAndGlyphs">11/01</text>
<rect x="1953.9" y="612" width="1" height="5" fill="#e9ebed"/>
<text x="1938.83" y="634.10" font-size="12.5" fill="#16191f" stroke="#16191f" stroke-width="0.2" textLength="31.30" lengthAdjust="spacingAndGlyphs">11/02</text>
<rect x="2058.4" y="612" width="1" height="5" fill="#e9ebed"/>
<text x="2043.26" y="634.10" font-size="12.5" fill="#16191f" stroke="#16191f" stroke-width="0.2" textLength="31.30" lengthAdjust="spacingAndGlyphs">11/03</text>
<rect x="2167.1" y="612" width="1" height="5" fill="#e9ebed"/>
<text x="2152.04" y="634.10" font-size="12.5" fill="#16191f" stroke="#16191f" stroke-width="0.2" textLength="31.30" lengthAdjust="spacingAndGlyphs">11/04</text>
<rect x="2271.6" y="612" width="1" height="5" fill="#e9ebed"/>
<text x="2256.47" y="634.10" font-size="12.5" fill="#16191f" stroke="#16191f" stroke-width="0.2" textLength="31.30" lengthAdjust="spacingAndGlyphs">11/05</text>
<rect x="2376.0" y="612" width="1" height="5" fill="#e9ebed"/>
<text x="2360.90" y="634.10" font-size="12.5" fill="#16191f" stroke="#16191f" stroke-width="0.2" textLength="31.30" lengthAdjust="spacingAndGlyphs">11/06</text>
<rect x="1694.10" y="646.30" width="12" height="12" rx="3" fill="#2ca02c"/>
<text x="1710.40" y="656.80" font-size="11" fill="#545b64" stroke="#545b64" stroke-width="0.2" textLength="107.10" lengthAdjust="spacingAndGlyphs">UDPPacketLossRate</text>
<rect x="1827.65" y="646.30" width="12" height="12" rx="3" fill="#a4a8ad"/>
<text x="1843.95" y="656.80" font-size="11" fill="#545b64" stroke="#545b64" stroke-width="0.2" textLength="163.00" lengthAdjust="spacingAndGlyphs">ANOMALY_DETECTION_BAND</text>
<polyline points="1810.6,610.8 1815.1,544.0 1819.9,610.8 1833.0,610.8 1836.9,578.4 1842.0,610.8 1885.4,610.8 1889.3,542.0 1893.7,513.5 1897.6,542.0 1901.8,610.8 1906.6,411.0 1910.8,576.9 1915.6,479.2 1919.8,610.8 1932.6,610.8 1937.1,578.4 1942.2,610.8 1962.5,610.8 1967.9,577.8 1976.6,577.8 1981.1,610.8 1988.8,610.8 1993.9,544.0 1997.8,610.8 2002.9,578.4 2007.4,610.8 2019.9,610.8 2023.8,544.0 2028.9,610.8 2254.4,610.8 2258.9,579.4 2264.0,610.8 2280.8,610.8 2285.0,578.5 2289.7,610.8 2293.9,578.5 2298.4,610.8 2302.9,579.4 2306.8,383.5 2310.7,610.8 2315.8,610.8 2319.7,447.2 2324.7,610.8 2329.2,578.5 2333.1,610.8 2350.8,610.8 2355.2,478.3 2359.1,610.8 2372.0,610.8 2376.5,577.3 2381.0,577.3 2385.5,610.8 2407.0,610.8 2412.1,578.5 2416.0,610.8 2419.9,610.8 2425.0,577.3 2429.4,610.8 2433.0,511.2 2438.4,610.8" fill="none" stroke="#7d7a3c" stroke-width="2.3" stroke-linejoin="round"/>
<polyline points="1810.6,610.8 1815.1,544.0 1819.9,610.8 1833.0,610.8 1836.9,578.4 1842.0,610.8 1885.4,610.8 1889.3,542.0 1893.7,513.5 1897.6,542.0 1901.8,610.8 1906.6,411.0 1910.8,576.9 1915.6,479.2 1919.8,610.8 1932.6,610.8 1937.1,578.4 1942.2,610.8 1962.5,610.8 1967.9,577.8 1976.6,577.8 1981.1,610.8 1988.8,610.8 1993.9,544.0 1997.8,610.8 2002.9,578.4 2007.4,610.8 2019.9,610.8 2023.8,544.0 2028.9,610.8 2254.4,610.8 2258.9,579.4 2264.0,610.8 2280.8,610.8 2285.0,578.5 2289.7,610.8 2293.9,578.5 2298.4,610.8 2302.9,579.4 2306.8,383.5 2310.7,610.8 2315.8,610.8 2319.7,447.2 2324.7,610.8 2329.2,578.5 2333.1,610.8 2350.8,610.8 2355.2,478.3 2359.1,610.8 2372.0,610.8 2376.5,577.3 2381.0,577.3 2385.5,610.8 2407.0,610.8 2412.1,578.5 2416.0,610.8 2419.9,610.8 2425.0,577.3 2429.4,610.8 2433.0,511.2 2438.4,610.8" fill="none" stroke="#2e9e2e" stroke-width="1.5" stroke-linejoin="round"/>
<text x="23.30" y="745.20" font-size="11" fill="#545b64" stroke="#545b64" stroke-width="0.2" textLength="40.70" lengthAdjust="spacingAndGlyphs">Percent</text>
<rect x="58.0" y="785.80" width="736.0" height="1" fill="#e9ebed"/>
<text x="55.00" y="790.30" font-size="12" fill="#16191f" stroke="#16191f" stroke-width="0.2" text-anchor="end" textLength="31.00" lengthAdjust="spacingAndGlyphs">50.00</text>
<rect x="58.0" y="822.10" width="736.0" height="1" fill="#e9ebed"/>
<text x="55.00" y="826.60" font-size="12" fill="#16191f" stroke="#16191f" stroke-width="0.2" text-anchor="end" textLength="31.00" lengthAdjust="spacingAndGlyphs">40.00</text>
<rect x="58.0" y="858.40" width="736.0" height="1" fill="#e9ebed"/>
<text x="55.00" y="862.90" font-size="12" fill="#16191f" stroke="#16191f" stroke-width="0.2" text-anchor="end" textLength="31.00" lengthAdjust="spacingAndGlyphs">30.00</text>
<rect x="58.0" y="894.60" width="736.0" height="1" fill="#e9ebed"/>
<text x="55.00" y="899.10" font-size="12" fill="#16191f" stroke="#16191f" stroke-width="0.2" text-anchor="end" textLength="31.00" lengthAdjust="spacingAndGlyphs">20.00</text>
<rect x="58.0" y="930.90" width="736.0" height="1" fill="#e9ebed"/>
<text x="55.00" y="935.40" font-size="12" fill="#16191f" stroke="#16191f" stroke-width="0.2" text-anchor="end" textLength="31.00" lengthAdjust="spacingAndGlyphs">10.00</text>
<rect x="63.0" y="946" width="731.0" height="2" fill="#c6c6c6"/>
<rect x="97.1" y="948" width="1" height="5" fill="#e9ebed"/>
<text x="81.98" y="970.10" font-size="12.5" fill="#16191f" stroke="#16191f" stroke-width="0.2" textLength="31.30" lengthAdjust="spacingAndGlyphs">10/31</text>
<rect x="201.5" y="948" width="1" height="5" fill="#e9ebed"/>
<text x="186.41" y="970.10" font-size="12.5" fill="#16191f" stroke="#16191f" stroke-width="0.2" textLength="31.30" lengthAdjust="spacingAndGlyphs">11/01</text>
<rect x="305.9" y="948" width="1" height="5" fill="#e9ebed"/>
<text x="290.83" y="970.10" font-size="12.5" fill="#16191f" stroke="#16191f" stroke-width="0.2" textLength="31.30" lengthAdjust="spacingAndGlyphs">11/02</text>
<rect x="410.4" y="948" width="1" height="5" fill="#e9ebed"/>
<text x="395.26" y="970.10" font-size="12.5" fill="#16191f" stroke="#16191f" stroke-width="0.2" textLength="31.30" lengthAdjust="spacingAndGlyphs">11/03</text>
<rect x="519.1" y="948" width="1" height="5" fill="#e9ebed"/>
<text x="504.04" y="970.10" font-size="12.5" fill="#16191f" stroke="#16191f" stroke-width="0.2" textLength="31.30" lengthAdjust="spacingAndGlyphs">11/04</text>
<rect x="623.6" y="948" width="1" height="5" fill="#e9ebed"/>
<text x="608.47" y="970.10" font-size="12.5" fill="#16191f" stroke="#16191f" stroke-width="0.2" textLength="31.30" lengthAdjust="spacingAndGlyphs">11/05</text>
<rect x="728.0" y="948" width="1" height="5" fill="#e9ebed"/>
<text x="712.90" y="970.10" font-size="12.5" fill="#16191f" stroke="#16191f" stroke-width="0.2" textLength="31.30" lengthAdjust="spacingAndGlyphs">11/06</text>
<rect x="46.10" y="982.50" width="12" height="12" rx="3" fill="#2ca02c"/>
<text x="62.40" y="993.00" font-size="11" fill="#545b64" stroke="#545b64" stroke-width="0.2" textLength="55.70" lengthAdjust="spacingAndGlyphs">CPUUsage</text>
<rect x="128.25" y="982.50" width="12" height="12" rx="3" fill="#a4a8ad"/>
<text x="144.55" y="993.00" font-size="11" fill="#545b64" stroke="#545b64" stroke-width="0.2" textLength="135.00" lengthAdjust="spacingAndGlyphs">Anomaly Detection Band</text>
<circle cx="93.2" cy="826.8" r="2.2" fill="#2ca02c"/>
<polyline points="162.8,767.2 166.7,895.7 171.6,943.0 175.4,945.8 179.1,944.6 184.5,945.8 193.6,945.8 197.8,943.6 202.1,945.0 206.3,944.8 210.6,943.8 214.8,945.0 219.6,943.8 223.9,946.0 228.1,943.6 233.0,945.0 237.0,940.6 250.5,940.6 254.2,939.4 259.0,819.6 262.6,939.0 271.7,943.8 276.0,942.6 280.2,943.8 285.6,943.8 288.7,945.8 294.1,945.8 297.8,943.4 302.0,944.5 307.4,944.8 311.1,946.0 314.7,941.8 319.6,945.8 341.4,945.8 349.8,943.6 355.9,943.8 359.5,944.8 372.8,945.0 375.3,945.8 381.3,945.8 385.0,947.0 393.4,944.8 397.7,945.8 401.9,944.8 407.9,944.8 410.4,945.8 414.6,944.8 419.5,947.2 427.3,944.8 433.4,944.8 437.0,945.8 477.8,945.9 481.0,947.5 484.9,945.9 503.0,945.9 509.3,944.3 515.6,941.8 520.3,943.9 528.2,942.8 532.9,943.9 537.6,942.8 543.9,942.8 546.3,941.8 550.2,942.8 556.5,943.1 559.7,943.9 562.8,942.8 572.3,942.8 576.2,945.0 584.9,942.8 589.6,942.8 593.5,944.6 599.0,945.0 602.2,945.9 616.4,945.9 621.1,944.6 625.0,945.0 629.0,946.2 636.8,943.5 644.7,945.9 649.4,944.6 655.7,944.6 658.9,942.8 668.3,942.8 671.5,941.8 676.2,943.1 685.6,943.1 690.4,943.9 693.8,940.2 698.2,943.9 702.2,942.8 706.9,947.0 710.8,945.9 720.3,945.9 724.2,944.6 728.9,945.9 736.0,945.9 742.3,944.9 754.9,944.9 758.1,943.9 768.3,943.9 772.2,940.7 777.0,942.8 780.9,941.8 784.8,943.9 789.6,942.8" fill="none" stroke="#7d7a3c" stroke-width="2.3" stroke-linejoin="round"/>
<polyline points="162.8,767.2 166.7,895.7 171.6,943.0 175.4,945.8 179.1,944.6 184.5,945.8 193.6,945.8 197.8,943.6 202.1,945.0 206.3,944.8 210.6,943.8 214.8,945.0 219.6,943.8 223.9,946.0 228.1,943.6 233.0,945.0 237.0,940.6 250.5,940.6 254.2,939.4 259.0,819.6 262.6,939.0 271.7,943.8 276.0,942.6 280.2,943.8 285.6,943.8 288.7,945.8 294.1,945.8 297.8,943.4 302.0,944.5 307.4,944.8 311.1,946.0 314.7,941.8 319.6,945.8 341.4,945.8 349.8,943.6 355.9,943.8 359.5,944.8 372.8,945.0 375.3,945.8 381.3,945.8 385.0,947.0 393.4,944.8 397.7,945.8 401.9,944.8 407.9,944.8 410.4,945.8 414.6,944.8 419.5,947.2 427.3,944.8 433.4,944.8 437.0,945.8 477.8,945.9 481.0,947.5 484.9,945.9 503.0,945.9 509.3,944.3 515.6,941.8 520.3,943.9 528.2,942.8 532.9,943.9 537.6,942.8 543.9,942.8 546.3,941.8 550.2,942.8 556.5,943.1 559.7,943.9 562.8,942.8 572.3,942.8 576.2,945.0 584.9,942.8 589.6,942.8 593.5,944.6 599.0,945.0 602.2,945.9 616.4,945.9 621.1,944.6 625.0,945.0 629.0,946.2 636.8,943.5 644.7,945.9 649.4,944.6 655.7,944.6 658.9,942.8 668.3,942.8 671.5,941.8 676.2,943.1 685.6,943.1 690.4,943.9 693.8,940.2 698.2,943.9 702.2,942.8 706.9,947.0 710.8,945.9 720.3,945.9 724.2,944.6 728.9,945.9 736.0,945.9 742.3,944.9 754.9,944.9 758.1,943.9 768.3,943.9 772.2,940.7 777.0,942.8 780.9,941.8 784.8,943.9 789.6,942.8" fill="none" stroke="#2e9e2e" stroke-width="1.5" stroke-linejoin="round"/>
<text x="847.30" y="745.20" font-size="11" fill="#545b64" stroke="#545b64" stroke-width="0.2" textLength="40.70" lengthAdjust="spacingAndGlyphs">Percent</text>
<rect x="880.6" y="800.70" width="737.4" height="1" fill="#e9ebed"/>
<text x="877.30" y="805.20" font-size="12" fill="#16191f" stroke="#16191f" stroke-width="0.2" text-anchor="end" textLength="22.80" lengthAdjust="spacingAndGlyphs">45.0</text>
<rect x="880.6" y="849.90" width="737.4" height="1" fill="#e9ebed"/>
<text x="877.30" y="854.40" font-size="12" fill="#16191f" stroke="#16191f" stroke-width="0.2" text-anchor="end" textLength="22.80" lengthAdjust="spacingAndGlyphs">40.0</text>
<rect x="880.6" y="899.10" width="737.4" height="1" fill="#e9ebed"/>
<text x="877.30" y="903.60" font-size="12" fill="#16191f" stroke="#16191f" stroke-width="0.2" text-anchor="end" textLength="22.80" lengthAdjust="spacingAndGlyphs">35.0</text>
<rect x="885.6" y="946" width="732.4" height="2" fill="#c6c6c6"/>
<rect x="919.4" y="948" width="1" height="5" fill="#e9ebed"/>
<text x="904.25" y="970.10" font-size="12.5" fill="#16191f" stroke="#16191f" stroke-width="0.2" textLength="31.30" lengthAdjust="spacingAndGlyphs">10/31</text>
<rect x="1024.1" y="948" width="1" height="5" fill="#e9ebed"/>
<text x="1008.97" y="970.10" font-size="12.5" fill="#16191f" stroke="#16191f" stroke-width="0.2" textLength="31.30" lengthAdjust="spacingAndGlyphs">11/01</text>
<rect x="1128.8" y="948" width="1" height="5" fill="#e9ebed"/>
<text x="1113.68" y="970.10" font-size="12.5" fill="#16191f" stroke="#16191f" stroke-width="0.2" textLength="31.30" lengthAdjust="spacingAndGlyphs">11/02</text>
<rect x="1233.5" y="948" width="1" height="5" fill="#e9ebed"/>
<text x="1218.39" y="970.10" font-size="12.5" fill="#16191f" stroke="#16191f" stroke-width="0.2" textLength="31.30" lengthAdjust="spacingAndGlyphs">11/03</text>
<rect x="1342.6" y="948" width="1" height="5" fill="#e9ebed"/>
<text x="1327.47" y="970.10" font-size="12.5" fill="#16191f" stroke="#16191f" stroke-width="0.2" textLength="31.30" lengthAdjust="spacingAndGlyphs">11/04</text>
<rect x="1447.3" y="948" width="1" height="5" fill="#e9ebed"/>
<text x="1432.19" y="970.10" font-size="12.5" fill="#16191f" stroke="#16191f" stroke-width="0.2" textLength="31.30" lengthAdjust="spacingAndGlyphs">11/05</text>
<rect x="1552.0" y="948" width="1" height="5" fill="#e9ebed"/>
<text x="1536.90" y="970.10" font-size="12.5" fill="#16191f" stroke="#16191f" stroke-width="0.2" textLength="31.30" lengthAdjust="spacingAndGlyphs">11/06</text>
<rect x="870.10" y="982.50" width="12" height="12" rx="3" fill="#2ca02c"/>
<text x="886.40" y="993.00" font-size="11" fill="#545b64" stroke="#545b64" stroke-width="0.2" textLength="77.70" lengthAdjust="spacingAndGlyphs">MemoryUsage</text>
<rect x="974.25" y="982.50" width="12" height="12" rx="3" fill="#a4a8ad"/>
<text x="990.55" y="993.00" font-size="11" fill="#545b64" stroke="#545b64" stroke-width="0.2" textLength="163.20" lengthAdjust="spacingAndGlyphs">ANOMALY_DETECTION_BAND</text>
<path d="M913.3,946.5 A2.2,2.2 0 0 1 917.7,946.5 Z" fill="#2ca02c"/>
<polyline points="984.9,810.6 990.0,822.9 993.9,874.0 997.8,873.1 1003.6,873.1 1011.7,870.5 1015.9,866.6 1019.8,860.1 1028.9,862.7 1032.8,861.7 1039.3,861.7 1045.7,858.5 1061.9,858.5 1065.2,860.1 1070.0,860.1 1077.1,857.8 1080.7,767.2 1085.6,861.7 1090.1,859.5 1093.7,861.1 1113.7,861.1 1115.4,859.5 1120.2,861.7 1133.8,861.7 1138.0,877.9 1142.2,882.1 1147.7,879.5 1154.2,877.3 1159.7,879.5 1165.5,879.5 1170.4,878.6 1186.6,878.6 1197.9,875.7 1247.0,875.6 1252.0,873.9 1273.2,873.9 1277.5,875.1 1282.6,875.1 1286.0,873.6 1291.0,875.1 1294.4,873.9 1298.7,871.4 1302.9,872.7 1313.1,872.7 1317.3,873.9 1326.6,873.9 1330.0,872.7 1340.2,872.6 1342.7,871.5 1352.1,871.5 1356.3,873.9 1362.2,873.9 1369.0,871.5 1373.3,872.7 1378.4,872.7 1381.7,879.8 1387.7,879.8 1391.1,879.0 1400.4,879.0 1403.8,877.6 1411.4,879.8 1416.5,879.8 1425.8,872.7 1430.1,871.4 1435.2,872.7 1442.8,870.9 1460.6,870.9 1464.8,868.8 1491.1,868.8 1495.3,867.5 1500.4,868.8 1505.5,867.5 1509.8,868.0 1521.6,870.9 1525.9,869.7 1535.2,871.9 1540.3,871.9 1545.4,870.5 1552.1,870.9 1557.2,874.8 1562.3,874.8 1567.4,873.6 1570.8,871.5 1587.7,871.5 1590.3,872.6 1596.2,872.6 1600.5,890.5 1603.0,892.2 1608.1,893.9 1613.5,890.5" fill="none" stroke="#7d7a3c" stroke-width="2.3" stroke-linejoin="round"/>
<polyline points="984.9,810.6 990.0,822.9 993.9,874.0 997.8,873.1 1003.6,873.1 1011.7,870.5 1015.9,866.6 1019.8,860.1 1028.9,862.7 1032.8,861.7 1039.3,861.7 1045.7,858.5 1061.9,858.5 1065.2,860.1 1070.0,860.1 1077.1,857.8 1080.7,767.2 1085.6,861.7 1090.1,859.5 1093.7,861.1 1113.7,861.1 1115.4,859.5 1120.2,861.7 1133.8,861.7 1138.0,877.9 1142.2,882.1 1147.7,879.5 1154.2,877.3 1159.7,879.5 1165.5,879.5 1170.4,878.6 1186.6,878.6 1197.9,875.7 1247.0,875.6 1252.0,873.9 1273.2,873.9 1277.5,875.1 1282.6,875.1 1286.0,873.6 1291.0,875.1 1294.4,873.9 1298.7,871.4 1302.9,872.7 1313.1,872.7 1317.3,873.9 1326.6,873.9 1330.0,872.7 1340.2,872.6 1342.7,871.5 1352.1,871.5 1356.3,873.9 1362.2,873.9 1369.0,871.5 1373.3,872.7 1378.4,872.7 1381.7,879.8 1387.7,879.8 1391.1,879.0 1400.4,879.0 1403.8,877.6 1411.4,879.8 1416.5,879.8 1425.8,872.7 1430.1,871.4 1435.2,872.7 1442.8,870.9 1460.6,870.9 1464.8,868.8 1491.1,868.8 1495.3,867.5 1500.4,868.8 1505.5,867.5 1509.8,868.0 1521.6,870.9 1525.9,869.7 1535.2,871.9 1540.3,871.9 1545.4,870.5 1552.1,870.9 1557.2,874.8 1562.3,874.8 1567.4,873.6 1570.8,871.5 1587.7,871.5 1590.3,872.6 1596.2,872.6 1600.5,890.5 1603.0,892.2 1608.1,893.9 1613.5,890.5" fill="none" stroke="#2e9e2e" stroke-width="1.5" stroke-linejoin="round"/>
<text x="1671.30" y="745.20" font-size="11" fill="#545b64" stroke="#545b64" stroke-width="0.2" textLength="40.70" lengthAdjust="spacingAndGlyphs">Percent</text>
<rect x="1706.2" y="794.80" width="735.8" height="1" fill="#e9ebed"/>
<text x="1703.00" y="799.30" font-size="12" fill="#16191f" stroke="#16191f" stroke-width="0.2" text-anchor="end" textLength="31.00" lengthAdjust="spacingAndGlyphs">80.00</text>
<rect x="1706.2" y="836.30" width="735.8" height="1" fill="#e9ebed"/>
<text x="1703.00" y="840.80" font-size="12" fill="#16191f" stroke="#16191f" stroke-width="0.2" text-anchor="end" textLength="31.00" lengthAdjust="spacingAndGlyphs">60.00</text>
<rect x="1706.2" y="877.90" width="735.8" height="1" fill="#e9ebed"/>
<text x="1703.00" y="882.40" font-size="12" fill="#16191f" stroke="#16191f" stroke-width="0.2" text-anchor="end" textLength="31.00" lengthAdjust="spacingAndGlyphs">40.00</text>
<rect x="1706.2" y="919.50" width="735.8" height="1" fill="#e9ebed"/>
<text x="1703.00" y="924.00" font-size="12" fill="#16191f" stroke="#16191f" stroke-width="0.2" text-anchor="end" textLength="31.00" lengthAdjust="spacingAndGlyphs">20.00</text>
<rect x="1711.2" y="946" width="730.8" height="2" fill="#c6c6c6"/>
<rect x="1745.1" y="948" width="1" height="5" fill="#e9ebed"/>
<text x="1729.98" y="970.10" font-size="12.5" fill="#16191f" stroke="#16191f" stroke-width="0.2" textLength="31.30" lengthAdjust="spacingAndGlyphs">10/31</text>
<rect x="1849.5" y="948" width="1" height="5" fill="#e9ebed"/>
<text x="1834.41" y="970.10" font-size="12.5" fill="#16191f" stroke="#16191f" stroke-width="0.2" textLength="31.30" lengthAdjust="spacingAndGlyphs">11/01</text>
<rect x="1953.9" y="948" width="1" height="5" fill="#e9ebed"/>
<text x="1938.83" y="970.10" font-size="12.5" fill="#16191f" stroke="#16191f" stroke-width="0.2" textLength="31.30" lengthAdjust="spacingAndGlyphs">11/02</text>
<rect x="2058.4" y="948" width="1" height="5" fill="#e9ebed"/>
<text x="2043.26" y="970.10" font-size="12.5" fill="#16191f" stroke="#16191f" stroke-width="0.2" textLength="31.30" lengthAdjust="spacingAndGlyphs">11/03</text>
<rect x="2167.1" y="948" width="1" height="5" fill="#e9ebed"/>
<text x="2152.04" y="970.10" font-size="12.5" fill="#16191f" stroke="#16191f" stroke-width="0.2" textLength="31.30" lengthAdjust="spacingAndGlyphs">11/04</text>
<rect x="2271.6" y="948" width="1" height="5" fill="#e9ebed"/>
<text x="2256.47" y="970.10" font-size="12.5" fill="#16191f" stroke="#16191f" stroke-width="0.2" textLength="31.30" lengthAdjust="spacingAndGlyphs">11/05</text>
<rect x="2376.0" y="948" width="1" height="5" fill="#e9ebed"/>
<text x="2360.90" y="970.10" font-size="12.5" fill="#16191f" stroke="#16191f" stroke-width="0.2" textLength="31.30" lengthAdjust="spacingAndGlyphs">11/06</text>
<rect x="1694.10" y="982.50" width="12" height="12" rx="3" fill="#1f77b4"/>
<text x="1710.40" y="993.00" font-size="11" fill="#545b64" stroke="#545b64" stroke-width="0.2" textLength="123.10" lengthAdjust="spacingAndGlyphs">RootVolumeDiskUsage</text>
<rect x="1843.65" y="982.50" width="12" height="12" rx="3" fill="#ff7f0e"/>
<text x="1859.95" y="993.00" font-size="11" fill="#545b64" stroke="#545b64" stroke-width="0.2" textLength="121.40" lengthAdjust="spacingAndGlyphs">UserVolumeDiskUsage</text>
<circle cx="1741.2" cy="769.4" r="2.2" fill="#1f77b4"/>
<path d="M1739,946 A2.2,2.2 0 0 1 1743.4,946 Z" fill="#ff7f0e"/>
<polyline points="1811.4,775.3 1814.7,777.5 1819.5,778.5 1902.1,778.5 1907.0,766.8 1911.8,771.7 1916.7,772.7 1919.9,771.7 1923.2,772.7 1958.8,772.7 1962.0,774.0 2097.7,773.8 2107.0,778.0 2425.2,778.0 2432.5,773.8 2437.6,773.8" fill="none" stroke="#1f77b4" stroke-width="2" stroke-linejoin="round"/>
<rect x="1811" y="946" width="626.6" height="2" fill="#ff7f0e"/>
</svg>
</body></html>
